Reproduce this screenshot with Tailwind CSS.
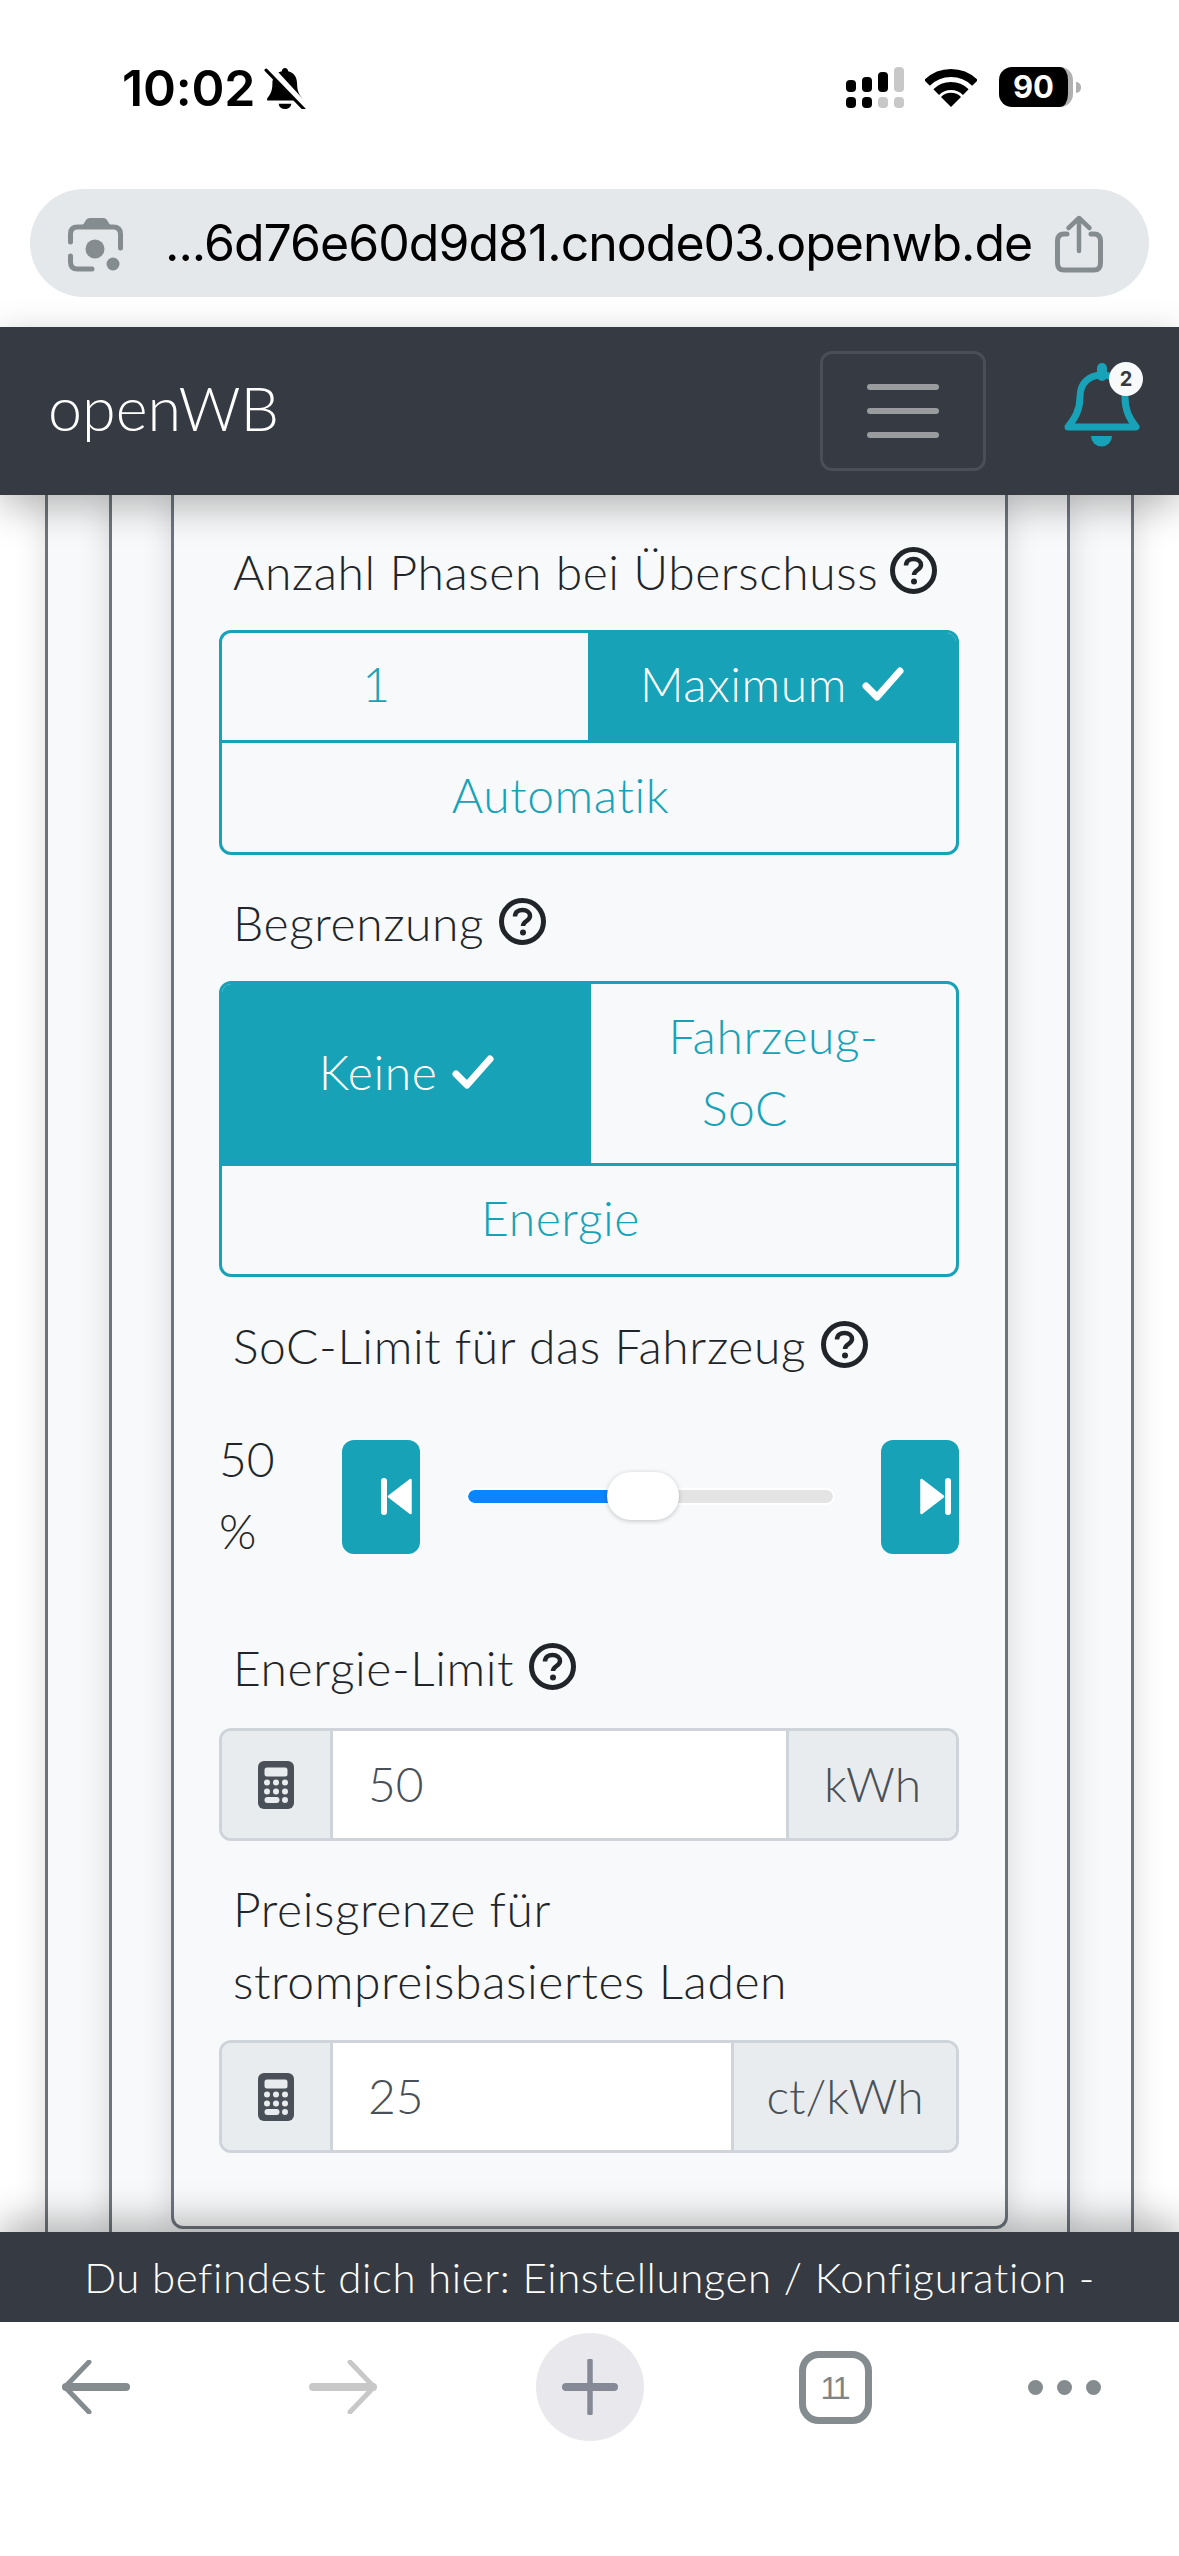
<!DOCTYPE html>
<html lang="de">
<head>
<meta charset="utf-8">
<script src="https://cdn.jsdelivr.net/npm/@tailwindcss/browser@4"></script>
<title>openWB</title>
</head>
<body class="bg-white">
<div class="w-[1179px] h-[2556px] overflow-hidden flex flex-col bg-white font-['Lato','Noto_Sans',sans-serif] font-light text-[48px] leading-[72px] tracking-[0.6px] text-[#212529]">

  <!-- iOS status bar -->
  <div class="h-[189px] shrink-0 flex items-start pt-[67px] pl-[122px] pr-[98px] tracking-normal">
    <span class="font-['Inter',sans-serif] font-semibold text-[50px] leading-[42px] tracking-[-0.2px] text-black">10:02</span>
    <svg class="ml-[9px]" width="42" height="42" viewBox="0 0 40 40">
      <path d="M20 1c1.700 0 3 1.300 3 3 6 1.500 8.500 6 8.500 12 0 7 2 10 5 14v2H3v-2c3-4 5-7 5-14 0-6 2.500-10.500 9-12 0-1.700 1.300-3 3-3z" fill="#000"/>
      <path d="M14 35h12a6 5 0 0 1-12 0z" fill="#000"/>
      <path d="M4 -1L40 38" stroke="#fff" stroke-width="6"/>
      <path d="M2 3L38 40" stroke="#000" stroke-width="3" stroke-linecap="round"/>
    </svg>
    <svg class="ml-auto" width="58" height="42" viewBox="0 0 58 42" fill="#000">
      <rect x="0" y="13" width="10" height="12" rx="4"/><rect x="16" y="10" width="10" height="15" rx="4"/><rect x="32" y="5" width="10" height="20" rx="4"/><rect x="48" y="0" width="10" height="25" rx="4" fill="#c8c8c8"/>
      <rect x="0" y="30" width="10" height="11" rx="4"/><rect x="16" y="30" width="10" height="11" rx="4"/><rect x="32" y="30" width="10" height="11" rx="4" fill="#c8c8c8"/><rect x="48" y="30" width="10" height="11" rx="4" fill="#c8c8c8"/>
    </svg>
    <svg class="ml-[21px] mt-[1px]" width="52" height="40" viewBox="96 12 52 40">
      <path d="M98 27A34 34 0 0 1 146 27" fill="none" stroke="#000" stroke-width="8"/>
      <path d="M107.200 36.200A21 21 0 0 1 136.800 36.200" fill="none" stroke="#000" stroke-width="8"/>
      <path d="M122 51L112 41A14 14 0 0 1 132 41Z" fill="#000"/>
    </svg>
    <div class="ml-[22px] w-[74px] h-[40px] rounded-[13px] bg-black border-r-[5px] border-[#b0b0b0] flex items-center justify-center font-['Inter',sans-serif] font-bold text-[31px] leading-[40px] text-white">90</div>
    <div class="ml-[3px] mt-[15px] w-[5px] h-[11px] rounded-r-full bg-[#b0b0b0]"></div>
  </div>

  <!-- browser address bar -->
  <div class="h-[138px] shrink-0 pl-[30px] pr-[30px]">
    <div class="h-[108px] rounded-[54px] bg-[#e5e8eb] flex items-center pl-[30px]">
      <svg width="70" height="70" viewBox="30 15 70 70">
        <path d="M40.500 49V41Q40.500 34 47.500 34H83Q90.500 34 90.500 41V55M40.500 63V69Q40.500 76 47.500 76H62" fill="none" stroke="#858c8f" stroke-width="5" stroke-linecap="round"/>
        <path d="M51 35L56 27Q57 25 60 25H73Q76 25 77 27L82 35Z" fill="#858c8f"/>
        <circle cx="65" cy="56" r="9.500" fill="#858c8f"/>
        <circle cx="83" cy="71" r="6.500" fill="#858c8f"/>
      </svg>
      <span class="ml-[35px] w-[870px] font-['Inter',sans-serif] font-normal text-[50px] leading-[60px] tracking-[-1px] text-black whitespace-nowrap">...6d76e60d9d81.cnode03.openwb.de</span>
      <svg class="ml-[15px]" width="60" height="65" viewBox="30 20 60 65">
        <path d="M47 43H44Q37.500 43 37.500 50V72Q37.500 79 44 79H74Q80.500 79 80.500 72V50Q80.500 43 74 43H71" fill="none" stroke="#858c8f" stroke-width="5" stroke-linecap="round"/>
        <path d="M59 60V28M48.500 37L59 27L69.500 37" fill="none" stroke="#858c8f" stroke-width="4.500" stroke-linecap="round" stroke-linejoin="round"/>
      </svg>
    </div>
  </div>

  <!-- openWB navbar -->
  <div class="relative z-10 h-[168px] shrink-0 bg-[#363a42] flex items-center pl-[48px] shadow-[0_12px_36px_rgba(0,0,0,0.28)]">
    <span class="text-[61px] leading-[72px] tracking-normal font-light text-white -mt-[6px]">openWB</span>
    <div class="ml-auto w-[166px] h-[120px] rounded-[12px] border-[3px] border-[#4a4e56] flex flex-col items-center justify-center gap-[18px]">
      <div class="w-[72px] h-[6px] rounded-full bg-[#9a9b9e]"></div>
      <div class="w-[72px] h-[6px] rounded-full bg-[#9a9b9e]"></div>
      <div class="w-[72px] h-[6px] rounded-full bg-[#9a9b9e]"></div>
    </div>
    <div class="relative ml-[54px] mr-[19px] -mt-[12px] w-[120px] h-[110px]">
      <svg width="120" height="110" viewBox="0 0 120 110">
        <path d="M28 77C35 68 40 60 40 47C40 33 49 25 62 25C75 25 85 33 85 47C85 60 89 68 96 77Z" fill="none" stroke="#17a2b8" stroke-width="7" stroke-linejoin="round"/>
        <path d="M62 18V26" stroke="#17a2b8" stroke-width="10" stroke-linecap="round"/>
        <path d="M51 86H72A10.500 10.500 0 0 1 51 86Z" fill="#17a2b8"/>
      </svg>
      <span class="absolute left-[69px] top-[12px] w-[34px] h-[34px] rounded-full bg-[#f8f9fa] flex items-center justify-center font-['Inter',sans-serif] font-bold text-[20px] leading-[34px] tracking-normal text-[#343a40]">2</span>
    </div>
  </div>

  <!-- page content -->
  <div class="flex-1 overflow-hidden px-[45px]">
    <div class="h-full border-x-[3px] border-[#6c757d] bg-[#f8f9fa] px-[61px] shadow-[0_0_30px_rgba(0,0,0,0.14)]">
      <div class="h-full border-x-[3px] border-[#6c757d] bg-[#f8f9fa] px-[59px] shadow-[0_0_30px_rgba(0,0,0,0.14)]">
        <div class="h-[1734px] border-x-[3px] border-b-[3px] border-[#6c757d] rounded-b-[12px] bg-[#f8f9fa] pl-[45px] pr-[46px] pt-[41px] shadow-[0_0_30px_rgba(0,0,0,0.14)]">

          <div class="flex items-center pl-[14px]">
            <span>Anzahl Phasen bei Überschuss</span>
            <svg class="ml-[12px] -mt-[3px]" width="47" height="47" viewBox="0 0 47 47"><circle cx="23.500" cy="23.500" r="21" fill="none" stroke="#212529" stroke-width="5"/><path d="M16 18.500C16 14 19.500 12 23.500 12C28 12 31 14.500 31 18C31 23 24 23 24 28" fill="none" stroke="#212529" stroke-width="4.500"/><circle cx="24" cy="34.500" r="3" fill="#212529"/></svg>
          </div>

          <div class="mt-[22px] rounded-[12px] border-[3px] border-[#17a2b8] overflow-hidden text-[#17a2b8]">
            <div class="flex h-[110px] border-b-[3px] border-[#17a2b8]">
              <div class="w-[366px] flex items-center justify-center pb-[5px]">
                <span>1</span>
                <svg class="ml-[15px] invisible" width="42" height="36" viewBox="0 0 42 36"><path d="M4 20L15 31L38 5" fill="none" stroke="#fff" stroke-width="7" stroke-linecap="round" stroke-linejoin="round"/></svg>
              </div>
              <div class="flex-1 bg-[#17a2b8] text-white flex items-center justify-center pb-[5px]">
                <span>Maximum</span>
                <svg class="ml-[15px]" width="42" height="36" viewBox="0 0 42 36"><path d="M4 20L15 31L38 5" fill="none" stroke="#fff" stroke-width="7" stroke-linecap="round" stroke-linejoin="round"/></svg>
              </div>
            </div>
            <div class="h-[109px] flex items-center justify-center pb-[5px]">
              <span>Automatik</span>
              <svg class="ml-[15px] invisible" width="42" height="36" viewBox="0 0 42 36"></svg>
            </div>
          </div>

          <div class="mt-[32px] flex items-center pl-[14px]">
            <span>Begrenzung</span>
            <svg class="ml-[15px] -mt-[3px]" width="47" height="47" viewBox="0 0 47 47"><circle cx="23.500" cy="23.500" r="21" fill="none" stroke="#212529" stroke-width="5"/><path d="M16 18.500C16 14 19.500 12 23.500 12C28 12 31 14.500 31 18C31 23 24 23 24 28" fill="none" stroke="#212529" stroke-width="4.500"/><circle cx="24" cy="34.500" r="3" fill="#212529"/></svg>
          </div>

          <div class="mt-[22px] rounded-[12px] border-[3px] border-[#17a2b8] overflow-hidden text-[#17a2b8]">
            <div class="flex h-[182px] border-b-[3px] border-[#17a2b8]">
              <div class="w-[369px] bg-[#17a2b8] text-white flex items-center justify-center pb-[4px]">
                <span>Keine</span>
                <svg class="ml-[15px]" width="42" height="36" viewBox="0 0 42 36"><path d="M4 20L15 31L38 5" fill="none" stroke="#fff" stroke-width="7" stroke-linecap="round" stroke-linejoin="round"/></svg>
              </div>
              <div class="flex-1 flex items-center justify-center text-center px-[40px] pb-[4px]">
                <span>Fahrzeug-<br><span class="inline-block pr-[57px]">SoC</span></span>
              </div>
            </div>
            <div class="h-[108px] flex items-center justify-center pb-[4px]">
              <span>Energie</span>
              <svg class="ml-[15px] invisible" width="42" height="36" viewBox="0 0 42 36"></svg>
            </div>
          </div>

          <div class="mt-[33px] flex items-center pl-[14px]">
            <span>SoC-Limit für das Fahrzeug</span>
            <svg class="ml-[15px] -mt-[3px]" width="47" height="47" viewBox="0 0 47 47"><circle cx="23.500" cy="23.500" r="21" fill="none" stroke="#212529" stroke-width="5"/><path d="M16 18.500C16 14 19.500 12 23.500 12C28 12 31 14.500 31 18C31 23 24 23 24 28" fill="none" stroke="#212529" stroke-width="4.500"/><circle cx="24" cy="34.500" r="3" fill="#212529"/></svg>
          </div>

          <div class="mt-[41px] flex items-center">
            <div class="w-[123px] pr-[50px] tracking-normal">50 %</div>
            <div class="w-[78px] h-[114px] mt-[3px] rounded-[12px] bg-[#17a2b8] flex items-center justify-end pr-[8px]">
              <svg width="31" height="37" viewBox="0 0 31 37"><rect x="0" y="0" width="6" height="37" rx="3" fill="#fff"/><path d="M29.500 2V35L8 18.500Z" fill="#fff" stroke="#fff" stroke-width="2.500" stroke-linejoin="round"/></svg>
            </div>
            <div class="relative mx-[48px] mt-[3px] flex-1 h-[13px] rounded-full flex overflow-visible outline-[2px] outline-white">
              <div class="w-[145px] h-full rounded-l-full bg-[#0a84ff]"></div>
              <div class="flex-1 h-full rounded-r-full bg-[#e4e4e4]"></div>
              <div class="absolute left-[139px] -top-[18px] w-[72px] h-[48px] rounded-[24px] bg-white shadow-[0_1px_5px_rgba(0,0,0,0.22)]"></div>
            </div>
            <div class="w-[78px] h-[114px] mt-[3px] rounded-[12px] bg-[#17a2b8] flex items-center justify-end pr-[8px]">
              <svg width="31" height="37" viewBox="0 0 31 37"><path d="M1.500 2V35L23 18.500Z" fill="#fff" stroke="#fff" stroke-width="2.500" stroke-linejoin="round"/><rect x="25" y="0" width="6" height="37" rx="3" fill="#fff"/></svg>
            </div>
          </div>

          <div class="mt-[65px] flex items-center pl-[14px]">
            <span>Energie-Limit</span>
            <svg class="ml-[15px] -mt-[3px]" width="47" height="47" viewBox="0 0 47 47"><circle cx="23.500" cy="23.500" r="21" fill="none" stroke="#212529" stroke-width="5"/><path d="M16 18.500C16 14 19.500 12 23.500 12C28 12 31 14.500 31 18C31 23 24 23 24 28" fill="none" stroke="#212529" stroke-width="4.500"/><circle cx="24" cy="34.500" r="3" fill="#212529"/></svg>
          </div>

          <div class="mt-[24px] h-[113px] rounded-[12px] border-[3px] border-[#ced4da] overflow-hidden flex text-[#495057]">
            <div class="w-[111px] shrink-0 bg-[#e9ecef] border-r-[3px] border-[#ced4da] flex items-center justify-center pr-[1px]">
              <svg width="36" height="48" viewBox="0 0 36 48"><rect width="36" height="48" rx="6" fill="#495057"/><rect x="6.500" y="6.500" width="23" height="9" rx="2.500" fill="#e9ecef"/><g fill="#e9ecef"><circle cx="9" cy="21.500" r="3"/><circle cx="18" cy="21.500" r="3"/><circle cx="27" cy="21.500" r="3"/><circle cx="9" cy="30.500" r="3"/><circle cx="18" cy="30.500" r="3"/><circle cx="27" cy="30.500" r="3"/><rect x="6.500" y="36" width="15" height="6" rx="3"/><circle cx="27" cy="39" r="3"/></g></svg>
            </div>
            <div class="flex-1 bg-white flex items-center pl-[35px] pb-[2px] tracking-normal">50</div>
            <div class="bg-[#e9ecef] border-l-[3px] border-[#ced4da] flex items-center justify-center w-[170px] shrink-0 pb-[2px] tracking-normal">kWh</div>
          </div>

          <div class="mt-[32px] pl-[14px]">Preisgrenze für<br>strompreisbasiertes Laden</div>

          <div class="mt-[23px] h-[113px] rounded-[12px] border-[3px] border-[#ced4da] overflow-hidden flex text-[#495057]">
            <div class="w-[111px] shrink-0 bg-[#e9ecef] border-r-[3px] border-[#ced4da] flex items-center justify-center pr-[1px]">
              <svg width="36" height="48" viewBox="0 0 36 48"><rect width="36" height="48" rx="6" fill="#495057"/><rect x="6.500" y="6.500" width="23" height="9" rx="2.500" fill="#e9ecef"/><g fill="#e9ecef"><circle cx="9" cy="21.500" r="3"/><circle cx="18" cy="21.500" r="3"/><circle cx="27" cy="21.500" r="3"/><circle cx="9" cy="30.500" r="3"/><circle cx="18" cy="30.500" r="3"/><circle cx="27" cy="30.500" r="3"/><rect x="6.500" y="36" width="15" height="6" rx="3"/><circle cx="27" cy="39" r="3"/></g></svg>
            </div>
            <div class="flex-1 bg-white flex items-center pl-[35px] pb-[2px] tracking-normal">25</div>
            <div class="bg-[#e9ecef] border-l-[3px] border-[#ced4da] flex items-center justify-center w-[225px] shrink-0 pb-[2px] tracking-normal">ct/kWh</div>
          </div>

        </div>
      </div>
    </div>
  </div>

  <!-- footer -->
  <div class="relative z-10 h-[90px] shrink-0 bg-[#363a42] flex items-center justify-center text-[42px] leading-[60px] tracking-[0.6px] text-white whitespace-nowrap shadow-[0_-12px_36px_rgba(0,0,0,0.28)]">Du befindest dich hier: Einstellungen / Konfiguration -</div>

  <!-- browser toolbar -->
  <div class="relative z-20 h-[234px] shrink-0 bg-white flex items-start pt-[11px] pl-[62px]">
    <svg class="mt-[27px]" width="68" height="54" viewBox="0 0 68 54"><path d="M4 27H64" stroke="#858c8f" stroke-width="8" stroke-linecap="round"/><path d="M27 2L3 27L27 52" fill="none" stroke="#858c8f" stroke-width="5" stroke-linecap="round" stroke-linejoin="round"/></svg>
    <svg class="ml-[179px] mt-[27px]" width="68" height="54" viewBox="0 0 68 54"><path d="M4 27H64" stroke="#c8c8c8" stroke-width="8" stroke-linecap="round"/><path d="M41 2L65 27L41 52" fill="none" stroke="#c8c8c8" stroke-width="5" stroke-linecap="round" stroke-linejoin="round"/></svg>
    <div class="ml-[159px] w-[108px] h-[108px] rounded-full bg-[#e9e9ed] flex items-center justify-center">
      <svg width="56" height="56" viewBox="0 0 56 56"><path d="M4 28H52" stroke="#858a96" stroke-width="8" stroke-linecap="round"/><path d="M28 2V54" stroke="#858a96" stroke-width="5.500" stroke-linecap="round"/></svg>
    </div>
    <div class="ml-[155px] mt-[18px] w-[73px] h-[73px] rounded-[20px] border-[7px] border-[#858c8f] flex items-center justify-center font-['Liberation_Sans',sans-serif] font-normal text-[32px] leading-[40px] tracking-[-3px] pr-[3px] text-[#7f8587]">11</div>
    <div class="ml-[156px] mt-[47px] flex gap-[14px]">
      <div class="w-[15px] h-[15px] rounded-full bg-[#858c8f]"></div>
      <div class="w-[15px] h-[15px] rounded-full bg-[#858c8f]"></div>
      <div class="w-[15px] h-[15px] rounded-full bg-[#858c8f]"></div>
    </div>
  </div>
</div>
</body>
</html>
